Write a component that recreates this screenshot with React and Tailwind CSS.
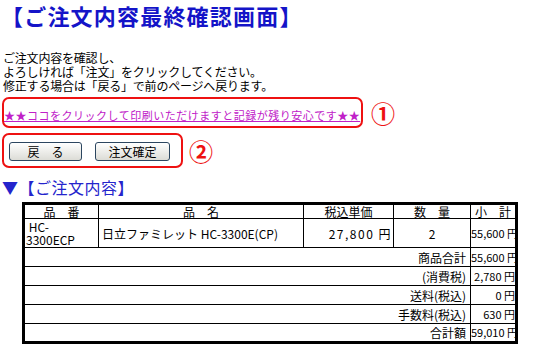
// App.jsx - order final confirmation screen
const jp = "font-['Noto_Sans_CJK_JP','Noto_Sans',sans-serif]"

const summary = [
  ['商品合計', '55,600 円'],
  ['(消費税)', '2,780 円'],
  ['送料(税込)', '0 円'],
  ['手数料(税込)', '630 円'],
  ['合計額', '59,010 円'],
]

function Button({ children, w }) {
  return (
    <button
      className={`${w} h-[19px] rounded-[3px] border border-[#2c4660] bg-gradient-to-b from-white to-[#dcdcd6] text-[12px] leading-[17px] text-black`}
    >
      {children}
    </button>
  )
}

function App() {
  return (
    <div className={`${jp} w-[550px] h-[347px] overflow-hidden bg-white text-black`}>
      <h1 className="pl-[1px] pt-[2px] text-[22px] leading-[26px] font-bold text-[#1414c8] tracking-[1.2px]">
        【ご注文内容最終確認画面】
      </h1>

      <div className="mt-[23px] pl-[3px] text-[12px] leading-[14px] tracking-[-0.2px]">
        <p>ご注文内容を確認し、</p>
        <p>よろしければ「注文」をクリックしてください。</p>
        <p>修正する場合は「戻る」で前のページへ戻ります。</p>
      </div>

      {/* print link */}
      <div className="mt-[4px] ml-[2px] flex items-center">
        <div className="w-[361px] h-[31px] rounded-[7px] border-2 border-[#ee1111] flex items-end pb-[4px]">
          <a href="#" className="text-[11px] leading-[14px] text-[#c020c8] underline whitespace-nowrap tracking-[0.5px]">
            ★★ココをクリックして印刷いただけますと記録が残り安心です★★
          </a>
        </div>
        <span className="ml-[8px] text-[24px] leading-[26px] font-bold text-[#ee1111]">①</span>
      </div>

      {/* buttons */}
      <div className="mt-[5px] ml-[2px] flex items-center">
        <div className="w-[181px] h-[35px] rounded-[7px] border-2 border-[#ee1111] flex items-center gap-[13px] pl-[5px] pt-[1px]">
          <Button w="w-[73px]">戻　る</Button>
          <Button w="w-[75px]">注文確定</Button>
        </div>
        <span className="ml-[6px] text-[24px] leading-[26px] font-bold text-[#ee1111]">②</span>
      </div>

      <h2 className="mt-[10px] pl-[2px] text-[16px] leading-[18px] text-[#2424cc] tracking-[0.5px]">
        ▼【ご注文内容】
      </h2>

      <table className="mt-[6px] ml-[22px] w-[493px] table-fixed border-collapse border-[3px] border-black text-[12px] leading-[13px]">
        <colgroup>
          <col className="w-[75px]" />
          <col className="w-[205px]" />
          <col className="w-[90px]" />
          <col className="w-[77px]" />
          <col className="w-[46px]" />
        </colgroup>
        <thead>
          <tr className="h-[15px]">
            <th className="border border-black font-normal p-0">品　番</th>
            <th className="border border-black font-normal p-0">品　名</th>
            <th className="border border-black font-normal p-0">税込単価</th>
            <th className="border border-black font-normal p-0">数　量</th>
            <th className="border border-black font-normal p-0">小　計</th>
          </tr>
        </thead>
        <tbody>
          <tr className="h-[29px]">
            <td className="border border-black p-0 pl-[1px] text-left align-middle">
              &nbsp;HC-<br />3300ECP
            </td>
            <td className="border border-black p-0 pl-[3px] align-middle whitespace-nowrap">日立ファミレット HC-3300E(CP)</td>
            <td className="border border-black p-0 pr-[1px] text-right align-middle tracking-[1.5px] whitespace-nowrap">27,800 円</td>
            <td className="border border-black p-0 text-center align-middle">2</td>
            <td className="border border-black p-0 text-right align-middle text-[11px] whitespace-nowrap">55,600 円</td>
          </tr>
          {summary.map(([label, value]) => (
            <tr key={label} className="h-[19px]">
              <td colSpan={4} className="border border-black p-0 pr-[4px] text-right align-middle">{label}</td>
              <td className="border border-black p-0 text-right align-middle text-[11px] whitespace-nowrap">{value}</td>
            </tr>
          ))}
        </tbody>
      </table>
    </div>
  )
}

export default App
